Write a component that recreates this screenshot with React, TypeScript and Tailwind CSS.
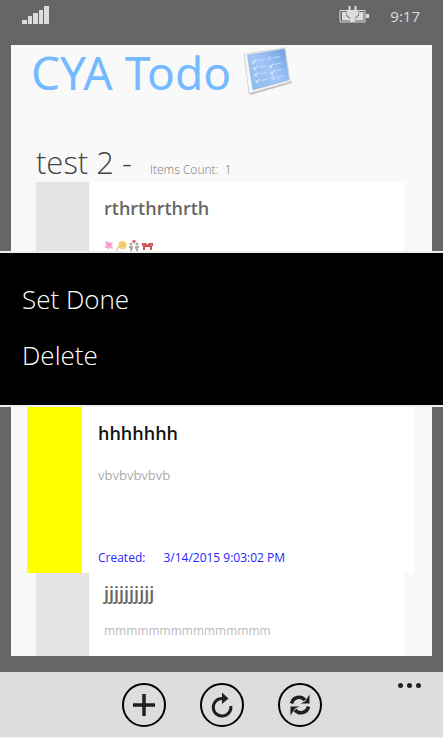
import type { ReactNode } from "react";

function SignalIcon() {
  return (
    <svg width="28" height="19" viewBox="0 0 28 19" fill="#dcdcdc" aria-hidden="true">
      <rect x="0" y="14" width="5" height="4" />
      <rect x="6" y="10" width="4" height="8" />
      <rect x="11" y="7" width="5" height="11" />
      <rect x="17" y="4" width="4" height="14" />
      <rect x="22" y="0" width="5" height="18" />
    </svg>
  );
}

function BatteryIcon() {
  return (
    <svg width="31" height="18" viewBox="0 0 31 18" aria-hidden="true">
      <path d="M8 4.500H1v11.500h25V4.500H18" fill="none" stroke="#dcdcdc" />
      <path d="M3 6h4v3.500l4 3.500v1.500H3zM24.500 6H20v3.500L16 13v1.500h8.500z" fill="#dcdcdc" />
      <path d="M27 8h3v4h-3zM9.500 0h2v4h4V0h2v4h2v4.500L16 12v4h-5v-4L7.500 8.500V4h2z" fill="#dcdcdc" />
    </svg>
  );
}

const boardRows = [0, 1, 2, 3];

function BoardLogo() {
  return (
    <svg width="50" height="50" viewBox="0 0 50 50" aria-hidden="true">
      <defs>
        <linearGradient id="board" x1="0" y1="1" x2="1" y2="0">
          <stop offset="0" stopColor="#86bce8" />
          <stop offset=".5" stopColor="#a3c5fa" />
          <stop offset="1" stopColor="#6b9fdd" />
        </linearGradient>
      </defs>
      <path d="M5 46l43-12 1 2L8 48z" fill="#c2c2c2" />
      <path d="M1 7L42 1l5 34L6 46.500z" fill="#f6f7f8" stroke="#c9cbce" strokeWidth=".8" />
      <path d="M4.500 8.300L41.500 2l4.200 31L10 42.800z" fill="url(#board)" stroke="#84a9d3" strokeWidth=".6" />
      {boardRows.map((row) => (
        <g key={row} transform={`translate(${9 + row * 1.2} ${14 + row * 6.5})`} stroke="#dfeaff" fill="none" opacity=".85">
          <path d="M0 0l1.500 2 2.500-4M0 0l2 1" strokeWidth="1.300" />
          <path d="M5.500 0l7-1.500" strokeWidth=".8" />
          {row === 1 || row === 2 ? (
            <path d="M16 -2l1.500 2 2.500-4M16 -2l2 1" strokeWidth="1.300" />
          ) : (
            <circle cx="17.500" cy="-2.500" r="1.500" strokeWidth=".9" />
          )}
          <path d="M21 -3l7-1.500" strokeWidth=".8" />
        </g>
      ))}
    </svg>
  );
}

// blossom, balloon, couple and crossed flags
function EmojiStrip() {
  return (
    <svg width="50" height="11" viewBox="0 0 50 11" aria-hidden="true">
      <path d="M1 1l3 1 1-1 1 2 3-1-1 3 1 4-3-1-2 2-1-3-3 1 2-3z" fill="#f9b0d6" />
      <path d="M2 2l5 5M7 3L2 8" stroke="#ee8ac0" />
      <circle cx="18.500" cy="5" r="4.300" fill="#f5d476" />
      <path d="M16 5l5-2M16 7l5-2" stroke="#e3b95a" strokeWidth=".7" />
      <path d="M15 7q-3 1-2 4" fill="none" stroke="#d9b86e" />
      <circle cx="27" cy="4" r="1.600" fill="#aaa" />
      <circle cx="33" cy="4" r="1.600" fill="#aaa" />
      <path d="M25 6h4v3h-1v2h-2V8h-1zM31 6h4v2h-1v3h-2V9h-1z" fill="#aaa" />
      <path d="M30 3.500L28 1l1-1 1 .7L31 0l1 1z" fill="#d94b4b" />
      <path d="M38 3h4l1.500 2L45 3h4v3h-1v4h-2V7h-5v3h-2V6h-1z" fill="#c9504d" />
      <path d="M39.500 5h1M46.500 5h1" stroke="#fff" strokeWidth=".8" />
    </svg>
  );
}

function AppBarButton({ label, children }: { label: string; children: ReactNode }) {
  return (
    <button
      type="button"
      aria-label={label}
      className="flex size-11 items-center justify-center rounded-full border-2 border-black text-[#1f1f1f]"
    >
      {children}
    </button>
  );
}

export default function App() {
  return (
    <div className="bg-[#666] font-['Open_Sans',sans-serif]">
      <header className="flex h-[45px] items-start justify-between pt-1.5 pr-[23px] pl-[22px]">
        <SignalIcon />
        <div className="flex items-start gap-5">
          <BatteryIcon />
          <time className="text-[15px] leading-5 text-[#dcdcdc]">9:17</time>
        </div>
      </header>

      <main>
        <section className="mx-[11px] bg-[#f9f9f9]">
          <div className="flex items-center gap-3 pl-5">
            <h1 className="font-['Noto_Sans',sans-serif] text-[46px] leading-[54px] text-[#75baff]">CYA Todo</h1>
            <BoardLogo />
          </div>
          <div className="flex items-baseline gap-[18px] pt-[43px] pl-[25px]">
            <h2 className="text-[31px] leading-10 font-light text-[#444]">test 2 -</h2>
            <p className="text-xs font-light whitespace-pre text-[#777]">Items Count:  1</p>
          </div>
          <article className="mr-7 ml-[25px] flex h-[69px] bg-white">
            <div className="w-[53px] shrink-0 bg-[#e4e4e4]" />
            <div className="pt-3 pl-[15px]">
              <h3 className="text-lg leading-7 font-semibold text-[#666]">rthrthrthrth</h3>
              <div className="pt-[18px]">
                <EmojiStrip />
              </div>
            </div>
          </article>
        </section>

        <div className="flex h-[156px] flex-col items-start border-y-2 border-[#eee] bg-black px-[22px] pt-[26px] text-[26px] leading-10 font-light text-white">
          <button type="button">Set Done</button>
          <button type="button" className="mt-4">Delete</button>
        </div>

        <section className="mx-[11px] bg-[#f9f9f9]">
          <article className="mr-[18px] ml-4 flex h-[166px] bg-white">
            <div className="w-[55px] shrink-0 bg-[#ff0]" />
            <div className="flex flex-col pt-3 pl-4">
              <h3 className="text-lg leading-7 font-semibold text-[#111]">hhhhhhh</h3>
              <p className="mt-4 text-[13px] leading-6 text-[#aaa]">vbvbvbvbvb</p>
              <p className="mt-auto flex gap-[18px] pb-[5px] text-xs leading-5 text-[#2525ff]">
                <span>Created:</span>
                <time>3/14/2015 9:03:02 PM</time>
              </p>
            </div>
          </article>
          <article className="mr-7 ml-[25px] flex h-[83px] bg-white">
            <div className="w-[53px] shrink-0 bg-[#e4e4e4]" />
            <div className="pt-1.5 pl-[15px]">
              <h3 className="text-lg leading-7 font-semibold text-[#666]">jjjjjjjjjj</h3>
              <p className="mt-3 text-xs leading-6 text-[#bbb]">mmmmmmmmmmmmmmm</p>
            </div>
          </article>
        </section>
      </main>

      <footer className="relative mt-4 flex h-[66px] items-center justify-center gap-[34px] border-b border-[#f4f4f4] bg-[#ddd]">
        <AppBarButton label="Add">
          <svg width="24" height="24" viewBox="0 0 24 24" aria-hidden="true">
            <path d="M12 1v22M1 12h22" stroke="currentColor" strokeWidth="3.500" />
          </svg>
        </AppBarButton>
        <AppBarButton label="Refresh">
          <svg width="26" height="26" viewBox="0 0 26 26" aria-hidden="true">
            <path d="M14.500 6.500H13A8.800 8.800 0 1 0 21.800 14" fill="none" stroke="currentColor" strokeWidth="3" />
            <path d="M13 .5L19.500 6.500L13 12z" fill="currentColor" />
          </svg>
        </AppBarButton>
        <AppBarButton label="Sync">
          <svg width="22" height="24" viewBox="0 0 22 24" aria-hidden="true">
            <path d="M2.500 10.500C4 4 11.500 2 16 7M19.500 13.500C18 20 10.500 22 6 17" fill="none" stroke="currentColor" strokeWidth="3.500" />
            <path d="M20.500 1.500v9h-9l4.500-2zM1.500 22.500v-9h9l-4.500 2z" fill="currentColor" />
          </svg>
        </AppBarButton>
        <button type="button" aria-label="More" className="absolute top-[7px] right-[22px] flex h-3 items-center gap-1">
          <span className="size-[5px] rounded-full bg-[#222]" />
          <span className="size-[5px] rounded-full bg-[#222]" />
          <span className="size-[5px] rounded-full bg-[#222]" />
        </button>
      </footer>
    </div>
  );
}
